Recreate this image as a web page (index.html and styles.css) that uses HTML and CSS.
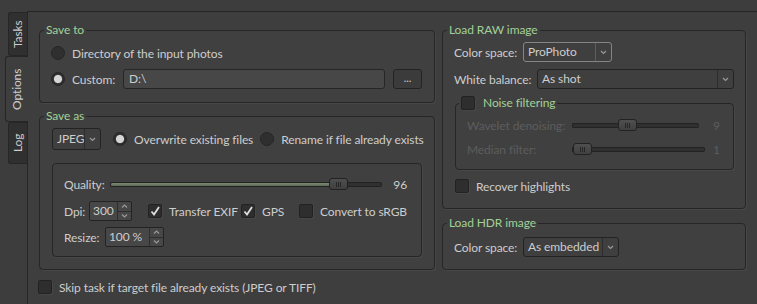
FILE: index.html
```html
<!DOCTYPE html>
<html lang="en">
<head>
    <meta charset="UTF-8">
    <title>Options</title>
    <link rel="stylesheet" href="styles.css">
</head>
<body>
    <div class="window">
        <div class="tabbar">
            <div class="tab tab-tasks">Tasks</div>
            <div class="tab tab-options active">Options</div>
            <div class="tab tab-log">Log</div>
        </div>

        <div class="pane">
            <div class="col-left">
                <fieldset class="group">
                    <legend>Save to</legend>
                    <div class="group-body save-to">
                        <div class="row">
                            <span class="radio"></span>
                            <span class="text">Directory of the input photos</span>
                        </div>
                        <div class="row row-custom">
                            <span class="radio on"></span>
                            <span class="text">Custom:</span>
                            <div class="line-edit">D:\</div>
                            <div class="tool-btn">...</div>
                        </div>
                    </div>
                </fieldset>

                <fieldset class="group save-as-group">
                    <legend>Save as</legend>
                    <div class="group-body save-as">
                        <div class="row row-format">
                            <div class="combo combo-format">
                                <span class="combo-val">JPEG</span>
                                <span class="combo-arrow"><svg width="7" height="5" viewBox="0 0 7 5"><polyline points="1,1 3.5,3.5 6,1" /></svg></span>
                            </div>
                            <span class="radio on overwrite"></span>
                            <span class="text">Overwrite existing files</span>
                            <span class="radio rename"></span>
                            <span class="text">Rename if file already exists</span>
                        </div>

                        <div class="frame">
                            <div class="row">
                                <span class="text lbl-quality">Quality:</span>
                                <div class="slider">
                                    <span class="groove groove-left filled" style="flex-basis: 80.4%"></span>
                                    <span class="handle"><span class="grip"></span></span>
                                    <span class="groove groove-right"></span>
                                </div>
                                <span class="text slider-val">96</span>
                            </div>
                            <div class="row row-dpi">
                                <span class="text lbl-dpi">Dpi:</span>
                                <div class="spin spin-dpi">
                                    <span class="spin-val">300</span>
                                    <span class="spin-btns">
                                        <span><svg width="7" height="4" viewBox="0 0 7 4"><polyline points="1,3.5 3.5,1 6,3.5" /></svg></span>
                                        <span><svg width="7" height="4" viewBox="0 0 7 4"><polyline points="1,0.5 3.5,3 6,0.5" /></svg></span>
                                    </span>
                                </div>
                                <span class="check-item item-exif"><span class="check on"><svg width="12" height="12" viewBox="0 0 12 12"><polyline points="2.5,6.5 5,9.5 10,2" /></svg></span><span class="text">Transfer EXIF</span></span>
                                <span class="check-item item-gps"><span class="check on"><svg width="12" height="12" viewBox="0 0 12 12"><polyline points="2.5,6.5 5,9.5 10,2" /></svg></span><span class="text">GPS</span></span>
                                <span class="check-item"><span class="check"></span><span class="text">Convert to sRGB</span></span>
                            </div>
                            <div class="row row-resize">
                                <span class="text lbl-resize">Resize:</span>
                                <div class="spin spin-resize">
                                    <span class="spin-val">100 %</span>
                                    <span class="spin-btns">
                                        <span><svg width="7" height="4" viewBox="0 0 7 4"><polyline points="1,3.5 3.5,1 6,3.5" /></svg></span>
                                        <span><svg width="7" height="4" viewBox="0 0 7 4"><polyline points="1,0.5 3.5,3 6,0.5" /></svg></span>
                                    </span>
                                </div>
                            </div>
                        </div>
                    </div>
                </fieldset>

                <div class="row row-skip">
                    <span class="check"></span>
                    <span class="text">Skip task if target file already exists (JPEG or TIFF)</span>
                </div>
            </div>

            <div class="col-right">
                <fieldset class="group">
                    <legend>Load RAW image</legend>
                    <div class="group-body raw">
                        <div class="row">
                            <span class="text lbl-cs">Color space:</span>
                            <div class="combo combo-prophoto focus">
                                <span class="combo-val">ProPhoto</span>
                                <span class="combo-arrow"><svg width="7" height="5" viewBox="0 0 7 5"><polyline points="1,1 3.5,3.5 6,1" /></svg></span>
                            </div>
                        </div>
                        <div class="row row-wb">
                            <span class="text lbl-wb">White balance:</span>
                            <div class="combo combo-wb">
                                <span class="combo-val">As shot</span>
                                <span class="combo-arrow"><svg width="7" height="5" viewBox="0 0 7 5"><polyline points="1,1 3.5,3.5 6,1" /></svg></span>
                            </div>
                        </div>

                        <fieldset class="group noise">
                            <legend><span class="check"></span><span class="text">Noise filtering</span></legend>
                            <div class="group-body noise-body">
                                <div class="row row-slim disabled">
                                    <span class="text lbl-noise">Wavelet denoising:</span>
                                    <div class="slider">
                                        <span class="groove groove-left" style="flex-basis: 36%"></span>
                                        <span class="handle"><span class="grip"></span></span>
                                        <span class="groove groove-right"></span>
                                    </div>
                                    <span class="text slider-val val-wide">9</span>
                                </div>
                                <div class="row row-slim row-median disabled">
                                    <span class="text lbl-noise">Median filter:</span>
                                    <div class="slider">
                                        <span class="groove groove-left" style="flex-basis: 0%"></span>
                                        <span class="handle"><span class="grip"></span></span>
                                        <span class="groove groove-right"></span>
                                    </div>
                                    <span class="text slider-val val-narrow">1</span>
                                </div>
                            </div>
                        </fieldset>

                        <div class="row row-slim row-recover">
                            <span class="check"></span>
                            <span class="text">Recover highlights</span>
                        </div>
                    </div>
                </fieldset>

                <fieldset class="group hdr-group">
                    <legend>Load HDR image</legend>
                    <div class="group-body hdr">
                        <div class="row">
                            <span class="text lbl-cs">Color space:</span>
                            <div class="combo combo-embedded">
                                <span class="combo-val">As embedded</span>
                                <span class="combo-arrow"><svg width="7" height="5" viewBox="0 0 7 5"><polyline points="1,1 3.5,3.5 6,1" /></svg></span>
                            </div>
                        </div>
                    </div>
                </fieldset>
            </div>
        </div>
    </div>
</body>
</html>
```

FILE: styles.css
```css
:root {
    --bg: #3d3d3d;
    --pane: #3e3e3e;
    --line: #262626;
    --text: #cdcdcd;
    --dim: #5d5d5d;
    --green: #a2d197;
    --field: #474747;
}
* {
    box-sizing: border-box;
}
body {
    margin: 0;
    width: 757px;
    height: 304px;
    overflow: hidden;
    background: var(--bg);
    font-family: Lato, "DejaVu Sans", sans-serif;
    font-size: 12px;
    letter-spacing: -0.1px;
    color: var(--text);
}
.window {
    display: flex;
    height: 304px;
}

/* left tab strip */
.tabbar {
    width: 27px;
    padding-top: 12px;
    display: flex;
    flex-direction: column;
    align-items: flex-end;
    position: relative;
    z-index: 1;
}
.tab {
    width: 19px;
    writing-mode: vertical-rl;
    transform: rotate(180deg);
    display: flex;
    align-items: center;
    justify-content: center;
    background: #303030;
    border: 1px solid var(--line);
    border-left: none;
    border-radius: 0 3px 3px 0;
    color: var(--text);
    line-height: 1;
}
.tab-tasks {
    height: 44px;
}
.tab-options {
    height: 66px;
}
.tab-log {
    height: 42px;
}
.tab.active {
    width: 23px;
    margin-right: -1px;
    background: var(--pane);
}

.pane {
    flex: 1;
    margin-top: 11px;
    border-top: 1px solid var(--line);
    border-left: 1px solid var(--line);
    background: var(--pane);
    display: flex;
    gap: 7px;
    padding: 10px 11px 0 11px;
}
.col-left {
    width: 396px;
}
.col-right {
    width: 304px;
}

/* group boxes */
.group {
    margin: 0;
    padding: 0;
    min-width: 0;
    border: 1px solid var(--line);
    border-radius: 4px;
    background: #404040;
    box-shadow: 1px 1px 0 #474747;
}
.group legend {
    margin-left: 4px;
    padding: 0 2px;
    line-height: 16px;
    color: var(--green);
}
.save-as-group {
    margin-top: 5px;
}
.hdr-group {
    margin-top: 6px;
}

.row {
    display: flex;
    align-items: center;
    height: 20px;
    white-space: nowrap;
}
.row-slim {
    height: 18px;
}

.save-to {
    padding: 5px 12px 13px 11px;
}
.row-custom {
    margin-top: 6px;
}
.radio {
    width: 14px;
    height: 14px;
    flex: none;
    border-radius: 50%;
    border: 1px solid #262626;
    background: #2f2f2f;
    margin-right: 7px;
}
.radio.on {
    background: radial-gradient(circle, #d6d6d6 0 3.6px, #2f2f2f 4.6px);
}
.line-edit {
    flex: 1;
    height: 20px;
    margin-left: 8px;
    padding-left: 5px;
    line-height: 18px;
    background: var(--field);
    border: 1px solid var(--line);
    border-radius: 3px;
}
.tool-btn {
    width: 29px;
    height: 20px;
    margin-left: 8px;
    border: 1px solid #232323;
    border-radius: 3px;
    background: #3b3b3b;
    text-align: center;
    line-height: 15px;
    font-size: 11px;
    color: #c8c8c8;
}

.save-as {
    padding: 4px 12px 12px 12px;
}
.row-format {
    height: 22px;
}
.radio.overwrite {
    margin-left: 12px;
}
.radio.rename {
    margin-left: 7px;
}

/* combo boxes */
.combo {
    display: flex;
    height: 20px;
    border: 1px solid #232323;
    border-radius: 3px;
    background: #3f3f3f;
}
.combo-val {
    flex: 1;
    padding-left: 4px;
    line-height: 18px;
}
.combo-arrow {
    width: 16px;
    border-left: 1px solid #2c2c2c;
    display: flex;
    align-items: center;
    justify-content: center;
}
.combo-arrow polyline,
.spin-btns polyline {
    fill: none;
    stroke: #9a9a9a;
    stroke-width: 1.2;
}
.combo-format {
    width: 49px;
    height: 22px;
}
.combo-format .combo-val {
    line-height: 20px;
}
.combo.focus {
    border-color: #848484;
}
.combo.focus .combo-arrow {
    border-left-color: #5e5e5e;
}
.combo-prophoto {
    width: 89px;
}
.combo-wb {
    flex: 1;
}
.combo-embedded {
    width: 96px;
}

/* inner frame */
.frame {
    margin-top: 13px;
    border: 1px solid var(--line);
    border-radius: 4px;
    padding: 10px 14px 9px 11px;
    box-shadow: 1px 1px 0 #474747;
}
.lbl-quality {
    width: 46px;
}
.slider {
    flex: 1;
    display: flex;
    align-items: center;
    height: 12px;
}
.groove {
    height: 5px;
    background: #303030;
    border: 1px solid #222;
}
.groove-left {
    flex-shrink: 0;
    border-right: none;
    border-radius: 2px 0 0 2px;
}
.groove-right {
    flex: 1;
    border-left: none;
    border-radius: 0 2px 2px 0;
}
.groove.filled {
    background: linear-gradient(#7d8b72, #5d6856);
}
.handle {
    width: 19px;
    height: 12px;
    flex: none;
    border: 1px solid #222;
    border-radius: 3px;
    background: linear-gradient(#4f4f4f, #404040);
    display: flex;
    align-items: center;
    justify-content: center;
}
.grip {
    width: 5px;
    height: 5px;
    background: repeating-linear-gradient(90deg, #262626 0 1px, transparent 1px 2px);
}
.slider-val {
    margin-left: 11px;
}

.row-dpi {
    margin-top: 7px;
}
.row-resize {
    margin-top: 6px;
}
.lbl-dpi {
    width: 27px;
}
.lbl-resize {
    width: 41px;
}
.spin {
    display: flex;
    height: 20px;
    border: 1px solid #232323;
    border-radius: 2px;
    background: var(--field);
}
.spin-dpi {
    width: 46px;
}
.spin-resize {
    width: 59px;
}
.spin-val {
    flex: 1;
    padding-left: 3px;
    line-height: 18px;
}
.spin-btns {
    width: 14px;
    border-left: 1px solid #2e2e2e;
    display: flex;
    flex-direction: column;
}
.spin-btns span {
    flex: 1;
    display: flex;
    align-items: center;
    justify-content: center;
}
.spin-btns span + span {
    border-top: 1px solid #2e2e2e;
}

.check {
    width: 14px;
    height: 14px;
    flex: none;
    border: 1px solid #222;
    border-radius: 2px;
    background: #2e2e2e;
    box-shadow: 1px 1px 0 #474747;
    display: flex;
    align-items: center;
    justify-content: center;
    margin-right: 7px;
}
.check polyline {
    fill: none;
    stroke: #e0e0e0;
    stroke-width: 1.8;
}
.check-item {
    display: flex;
    align-items: center;
    flex: none;
}
.item-exif {
    min-width: 92px;
    margin-left: 16px;
    margin-right: 1px;
}
.item-gps {
    min-width: 58px;
}

.row-skip {
    margin-top: 7px;
    margin-left: -1px;
}

/* right column */
.raw {
    padding: 4px 11px 13px 11px;
}
.hdr {
    padding: 6px 11px 12px 11px;
}
.lbl-cs {
    width: 69px;
}
.row-wb {
    margin-top: 7px;
}
.lbl-wb {
    width: 83px;
}
.group.noise {
    margin: 6px 0 0 1px;
    background: none;
}
.noise legend {
    display: flex;
    align-items: center;
    margin-left: 3px;
    height: 16px;
}
.noise legend .check {
    margin-right: 8px;
}
.noise-body {
    padding: 5px 12px 11px 11px;
}
.row-median {
    margin-top: 6px;
}
.lbl-noise {
    width: 105px;
}
.disabled .text {
    color: var(--dim);
}
.val-wide {
    margin-left: 14px;
    width: 8px;
}
.val-narrow {
    margin-left: 8px;
    width: 8px;
}
.row-recover {
    margin-top: 7px;
    margin-left: 1px;
}
```
